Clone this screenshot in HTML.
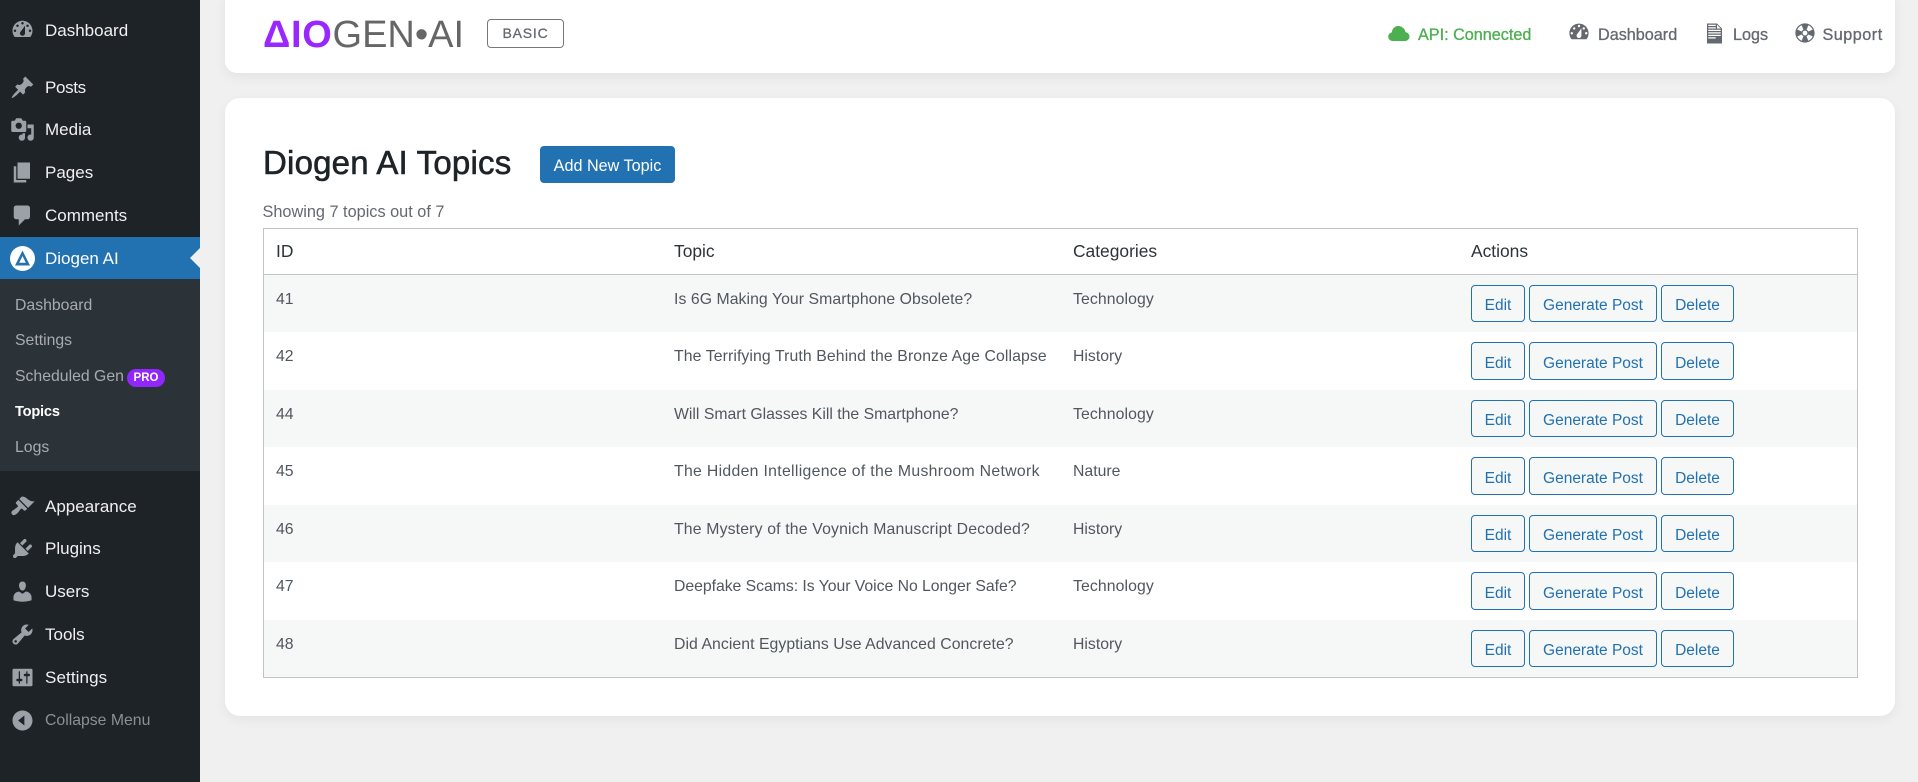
<!DOCTYPE html>
<html lang="en">
<head>
<meta charset="utf-8">
<title>Diogen AI Topics</title>
<style>
*{box-sizing:border-box}
html,body{margin:0;padding:0;width:1918px;height:782px;overflow:hidden;background:#f0f0f0;font-family:"Liberation Sans",Arial,sans-serif}
#side{position:absolute;left:0;top:0;width:200px;height:782px;background:#1d2327}
#side a{position:absolute;white-space:nowrap;text-decoration:none}
.m{left:45px;height:24px;line-height:24px;font-size:17px;color:#f0f0f1}
.s{left:15px;height:22px;line-height:22px;font-size:15.8px;color:#a8abaf}
.i{position:absolute;left:10px;width:25px;height:25px;fill:#9ca1a7}
#cur{position:absolute;left:0;top:237px;width:200px;height:42px;background:#2271b1}
#sub{position:absolute;left:0;top:279px;width:200px;height:192px;background:#2c3338}
#arrow{position:absolute;left:190px;top:248px;width:0;height:0;border:10px solid transparent;border-right-color:#f0f0f1;border-left:0}
#pro{position:absolute;left:127px;top:369px;width:38px;height:18px;border-radius:9px;background:#9127fc;color:#fff;font-size:11.5px;font-weight:700;line-height:18px;text-align:center}
#top{position:absolute;left:225px;top:-12px;width:1670px;height:85px;background:#fff;border-radius:12px;box-shadow:0 4px 12px rgba(0,0,0,.06)}
#main{position:absolute;left:225px;top:98px;width:1670px;height:618px;background:#fff;border-radius:15px;box-shadow:0 4px 12px rgba(0,0,0,.05)}
#logo{position:absolute;left:263px;top:13px;height:44px;line-height:44px;font-size:38px;color:#666;white-space:nowrap}
#logo b{color:#9b27ff;letter-spacing:.7px}
#badge{position:absolute;left:487px;top:19px;width:77px;height:29px;border:1px solid #777;border-radius:4px;font-size:14px;font-weight:400;letter-spacing:.8px;line-height:27px;text-align:center;color:#646970;-webkit-text-stroke:.3px #646970}
.n{position:absolute;top:25px;height:20px;line-height:20px;font-size:16.2px;color:#646970;white-space:nowrap;-webkit-text-stroke:.3px currentColor}
.ni{position:absolute;fill:#646970}
h1{position:absolute;left:263px;top:143px;margin:0;font-size:33px;line-height:40px;font-weight:400;letter-spacing:.2px;color:#1d2327;-webkit-text-stroke:.6px #1d2327;white-space:nowrap}
#add{position:absolute;left:540px;top:146px;width:135px;height:37px;background:#2271b1;border-radius:4px;color:#fff;font-size:16.2px;line-height:41px;text-align:center;white-space:nowrap}
#count{position:absolute;left:262.5px;top:202px;font-size:16.3px;line-height:20px;color:#646970;white-space:nowrap}
table{position:absolute;left:263px;top:228px;width:1595px;height:449px;table-layout:fixed;border-collapse:separate;border-spacing:0;border:1px solid #c3c4c7;background:#fff}
th{height:46px;padding:0 0 1px 12px;border-bottom:1px solid #c3c4c7;text-align:left;font-weight:400;font-size:17.4px;color:#2c3338;line-height:20px;vertical-align:middle}
td{padding:15px 0 0 12px;font-size:15.8px;line-height:20px;color:#50575e;vertical-align:top;white-space:nowrap;position:relative}
tr.a td{background:#f6f7f7}
.b{position:absolute;top:10px;height:37px;border:1px solid #2271b1;border-radius:4px;background:#f6f7f7;color:#2271b1;font-size:15.5px;line-height:40px;text-align:center}
tbody tr:nth-child(even) .b{height:38px;line-height:41px}
.b1{left:12px;width:54px}
.b2{left:70px;width:128px}
.b3{left:202px;width:73px}
</style>
</head>
<body>

<nav id="side">
<svg class="i" style="top:17px" viewBox="0 0 20 20"><path fill-rule="evenodd" d="M3.76 16h12.48c1.1-1.37 1.76-3.11 1.76-5 0-4.42-3.58-8-8-8s-8 3.58-8 8c0 1.89.66 3.63 1.76 5zM10 4c.55 0 1 .45 1 1s-.45 1-1 1-1-.45-1-1 .45-1 1-1zM6 6c.55 0 1 .45 1 1s-.45 1-1 1-1-.45-1-1 .45-1 1-1zm8 0c.55 0 1 .45 1 1s-.45 1-1 1-1-.45-1-1 .45-1 1-1zm-5.37 5.55L12 7v6c0 1.1-.9 2-2 2s-2-.9-2-2c0-.57.24-1.08.63-1.45zM4 10c.55 0 1 .45 1 1s-.45 1-1 1-1-.45-1-1 .45-1 1-1zm12 0c.55 0 1 .45 1 1s-.45 1-1 1-1-.45-1-1 .45-1 1-1z"/></svg>
<a class="m" style="top:19px">Dashboard</a>
<svg class="i" style="top:75px" viewBox="0 0 20 20"><path d="M10.44 3.02l1.82-1.82 6.36 6.35-1.83 1.82c-1.05-.68-2.48-.57-3.41.36l-.75.75c-.92.93-1.04 2.35-.35 3.41l-1.83 1.82-2.41-2.41-2.8 2.79c-.42.42-3.38 2.71-3.8 2.29s1.86-3.39 2.28-3.81l2.79-2.79L4.1 9.36l1.83-1.82c1.05.69 2.48.57 3.4-.36l.75-.75c.93-.92 1.05-2.35.36-3.41z"/></svg>
<a class="m" style="top:76px;letter-spacing:-.35px">Posts</a>
<svg class="i" style="top:117px" viewBox="0 0 20 20"><path fill-rule="evenodd" d="M13 11V4c0-.55-.45-1-1-1h-1.67L9 1H5L3.67 3H2c-.55 0-1 .45-1 1v7c0 .55.45 1 1 1h10c.55 0 1-.45 1-1zM7 4.5c1.38 0 2.5 1.12 2.5 2.5S8.38 9.5 7 9.5 4.5 8.38 4.5 7 5.62 4.5 7 4.5zM14 6h5v10.5c0 1.38-1.12 2.5-2.5 2.5S14 17.88 14 16.5s1.12-2.5 2.5-2.5c.17 0 .34.02.5.05V9h-3V6zm-4 8.05V13h2v3.5c0 1.38-1.12 2.5-2.5 2.5S7 17.88 7 16.5 8.12 14 9.5 14c.17 0 .34.02.5.05z"/></svg>
<a class="m" style="top:118px">Media</a>
<svg class="i" style="top:160px" viewBox="0 0 20 20"><path d="M6 15V2h10v13H6zm-1 1h8v2H3V5h2v11z"/></svg>
<a class="m" style="top:161px">Pages</a>
<svg class="i" style="top:203px" viewBox="0 0 20 20"><path d="M5 2h9c1.1 0 2 .9 2 2v7c0 1.1-.9 2-2 2h-2l-5 5v-5H5c-1.1 0-2-.9-2-2V4c0-1.1.9-2 2-2z"/></svg>
<a class="m" style="top:204px">Comments</a>

<div id="cur"></div>
<div id="arrow"></div>
<svg class="i" style="top:246px;fill:#fff" viewBox="0 0 25 25"><circle cx="12.5" cy="12.5" r="12.5" fill="#fff"/><path fill="#2271b1" fill-rule="evenodd" d="M12.5 4.5L20 19.5H5zM12.5 10L9.2 16.7h6.6z"/></svg>
<a class="m" style="top:247px;color:#fff">Diogen AI</a>

<div id="sub"></div>
<a class="s" style="top:295px">Dashboard</a>
<a class="s" style="top:330px">Settings</a>
<a class="s" style="top:366px">Scheduled Gen</a>
<span id="pro">PRO</span>
<a class="s" style="top:401px;color:#fff;font-weight:700;font-size:14.6px;letter-spacing:-.2px">Topics</a>
<a class="s" style="top:437px">Logs</a>

<svg class="i" style="top:494px" viewBox="0 0 20 20"><path d="M14.48 11.06L7.41 3.99l1.5-1.5c.5-.56 2.3-.47 3.51.32 1.21.8 1.43 1.28 2.91 2.1 1.18.64 2.45 1.26 4.45.85zm-.71.71L6.7 4.7 4.93 6.47c-.39.39-.39 1.02 0 1.41l1.06 1.06c.39.39.39 1.03 0 1.42-.6.6-1.43 1.11-2.21 1.69-.35.26-.7.53-1.01.84C1.43 13.23.4 14.98 1.7 16.28c1.3 1.3 3.05.27 4.39-1.07.31-.31.58-.66.84-1.01.58-.78 1.09-1.61 1.69-2.21.39-.39 1.03-.39 1.42 0l1.06 1.06c.39.39 1.02.39 1.41 0z"/></svg>
<a class="m" style="top:495px">Appearance</a>
<svg class="i" style="top:536px" viewBox="0 0 20 20"><path d="M13.11 4.36L9.87 7.6 8 5.73l3.24-3.24c.35-.34 1.05-.2 1.56.32.52.51.66 1.21.31 1.55zm-8 1.77l.91-1.12 9.01 9.01-1.19.84c-.71.71-2.63 1.16-3.82 1.16H6.14L4.9 17.26c-.59.59-1.54.59-2.12 0-.59-.58-.59-1.53 0-2.12l1.24-1.24v-3.88c0-1.13.4-3.19 1.09-3.89zm7.26 3.97l3.24-3.24c.34-.35 1.04-.21 1.55.31.52.51.66 1.21.31 1.55l-3.24 3.25z"/></svg>
<a class="m" style="top:537px">Plugins</a>
<svg class="i" style="top:579px" viewBox="0 0 20 20"><path d="M10 9.25c-2.27 0-2.73-3.44-2.73-3.44C7 4.02 7.82 2 9.97 2c2.16 0 2.98 2.02 2.71 3.81 0 0-.41 3.44-2.68 3.44zm0 2.57L12.72 10c2.39 0 4.52 2.33 4.52 4.53v2.49s-3.65 1.13-7.24 1.13c-3.65 0-7.24-1.13-7.24-1.13v-2.49c0-2.25 1.94-4.48 4.47-4.48z"/></svg>
<a class="m" style="top:580px">Users</a>
<svg class="i" style="top:622px" viewBox="0 0 20 20"><path fill-rule="evenodd" d="M16.68 9.77c-1.34 1.34-3.3 1.67-4.95.99l-5.41 6.52c-.99.99-2.59.99-3.58 0s-.99-2.59 0-3.57l6.52-5.42c-.68-1.65-.35-3.61.99-4.95 1.28-1.28 3.12-1.62 4.72-1.06l-2.89 2.89 2.82 2.82 2.86-2.87c.53 1.58.18 3.39-1.08 4.65zM3.81 16.21c.4.39 1.04.39 1.43 0 .4-.4.4-1.04 0-1.43-.39-.4-1.03-.4-1.43 0-.39.39-.39 1.03 0 1.43z"/></svg>
<a class="m" style="top:623px">Tools</a>
<svg class="i" style="top:665px" viewBox="0 0 20 20"><path fill-rule="evenodd" d="M18 16V4c0-.55-.45-1-1-1H3c-.55 0-1 .45-1 1v12c0 .55.45 1 1 1h14c.55 0 1-.45 1-1zM8 11h1c.55 0 1 .45 1 1s-.45 1-1 1H8v1.5c0 .28-.22.5-.5.5s-.5-.22-.5-.5V13H6c-.55 0-1-.45-1-1s.45-1 1-1h1V5.5c0-.28.22-.5.5-.5s.5.22.5.5V11zm5-2h-1c-.55 0-1-.45-1-1s.45-1 1-1h1V5.5c0-.28.22-.5.5-.5s.5.22.5.5V7h1c.55 0 1 .45 1 1s-.45 1-1 1h-1v5.5c0 .28-.22.5-.5.5s-.5-.22-.5-.5V9z"/></svg>
<a class="m" style="top:666px;letter-spacing:.1px">Settings</a>
<svg class="i" style="top:708px" viewBox="0 0 20 20"><path fill-rule="evenodd" d="M18 10c0-4.42-3.58-8-8-8s-8 3.58-8 8 3.58 8 8 8 8-3.58 8-8zm-6.5-4v8l-5-4z"/></svg>
<a class="m" style="top:709px;color:#8c8f94;font-size:15.8px">Collapse Menu</a>
</nav>

<header>
<div id="top"></div>
<div id="logo"><b>ΔIO</b>GEN•AI</div>
<div id="badge">BASIC</div>

<svg class="ni" style="left:1387px;top:21px;width:25px;height:25px;fill:#4caf50" viewBox="0 0 20 20"><path d="M14.9 9c1.8.2 3.1 1.7 3.1 3.5 0 1.9-1.6 3.5-3.5 3.5h-10C2.6 16 1 14.4 1 12.5c0-1.7 1.2-3.1 2.9-3.4C4 6.3 6.3 4 9 4c2.9 0 5.3 2.2 5.9 5z"/></svg>
<span class="n" style="left:1418px;color:#4caf50">API: Connected</span>

<svg class="ni" style="left:1567px;top:20px;width:24px;height:24px" viewBox="0 0 20 20"><path fill-rule="evenodd" d="M3.76 16h12.48c1.1-1.37 1.76-3.11 1.76-5 0-4.42-3.58-8-8-8s-8 3.58-8 8c0 1.89.66 3.63 1.76 5zM10 4c.55 0 1 .45 1 1s-.45 1-1 1-1-.45-1-1 .45-1 1-1zM6 6c.55 0 1 .45 1 1s-.45 1-1 1-1-.45-1-1 .45-1 1-1zm8 0c.55 0 1 .45 1 1s-.45 1-1 1-1-.45-1-1 .45-1 1-1zm-5.37 5.55L12 7v6c0 1.1-.9 2-2 2s-2-.9-2-2c0-.57.24-1.08.63-1.45zM4 10c.55 0 1 .45 1 1s-.45 1-1 1-1-.45-1-1 .45-1 1-1zm12 0c.55 0 1 .45 1 1s-.45 1-1 1-1-.45-1-1 .45-1 1-1z"/></svg>
<span class="n" style="left:1598px">Dashboard</span>

<svg class="ni" style="left:1702px;top:21px;width:25px;height:25px" viewBox="0 0 20 20"><path fill-rule="evenodd" d="M12 2l4 4v12H4V2h8zM5 3v1h6V3H5zm7 3h3l-3-3v3zM5 5v1h6V5H5zm10 3V7H5v1h10zm0 2V9H5v1h10zm0 2v-1H5v1h10zm-4 2v-1H5v1h6z"/></svg>
<span class="n" style="left:1733px">Logs</span>

<svg class="ni" style="left:1792.5px;top:21px;width:24px;height:24px" viewBox="0 0 20 20"><path fill-rule="evenodd" d="M18 10c0-4.42-3.58-8-8-8s-8 3.58-8 8 3.58 8 8 8 8-3.58 8-8zM7.23 3.57L8.72 7.3c-.62.29-1.13.8-1.42 1.42L3.57 7.23c.71-1.64 2.02-2.95 3.66-3.66zm9.2 3.66L12.7 8.72c-.29-.62-.8-1.13-1.42-1.42l1.49-3.73c1.64.71 2.95 2.02 3.66 3.66zM10 12c-1.1 0-2-.9-2-2s.9-2 2-2 2 .9 2 2-.9 2-2 2zm-6.43.77l3.73-1.49c.29.62.8 1.13 1.42 1.42l-1.49 3.73c-1.64-.71-2.95-2.02-3.66-3.66zm9.2 3.66l-1.49-3.73c.62-.29 1.13-.8 1.42-1.42l3.73 1.49c-.71 1.64-2.02 2.95-3.66 3.66z"/></svg>
<span class="n" style="left:1822.5px;letter-spacing:.5px">Support</span>
</header>

<main>
<div id="main"></div>
<h1>Diogen AI Topics</h1>
<div id="add">Add New Topic</div>
<div id="count">Showing 7 topics out of 7</div>

<table>
<colgroup><col style="width:398px"><col style="width:399px"><col style="width:398px"><col></colgroup>
<thead><tr><th>ID</th><th>Topic</th><th>Categories</th><th>Actions</th></tr></thead>
<tbody>
<tr class="a" style="height:57px"><td>41</td><td style="letter-spacing:.06px">Is 6G Making Your Smartphone Obsolete?</td><td style="letter-spacing:.1px">Technology</td><td><span class="b b1">Edit</span><span class="b b2">Generate Post</span><span class="b b3">Delete</span></td></tr>
<tr style="height:58px"><td>42</td><td style="letter-spacing:.1px">The Terrifying Truth Behind the Bronze Age Collapse</td><td>History</td><td><span class="b b1">Edit</span><span class="b b2">Generate Post</span><span class="b b3">Delete</span></td></tr>
<tr class="a" style="height:57px"><td>44</td><td>Will Smart Glasses Kill the Smartphone?</td><td style="letter-spacing:.1px">Technology</td><td><span class="b b1">Edit</span><span class="b b2">Generate Post</span><span class="b b3">Delete</span></td></tr>
<tr style="height:58px"><td>45</td><td style="letter-spacing:.31px">The Hidden Intelligence of the Mushroom Network</td><td>Nature</td><td><span class="b b1">Edit</span><span class="b b2">Generate Post</span><span class="b b3">Delete</span></td></tr>
<tr class="a" style="height:57px"><td>46</td><td style="letter-spacing:.16px">The Mystery of the Voynich Manuscript Decoded?</td><td>History</td><td><span class="b b1">Edit</span><span class="b b2">Generate Post</span><span class="b b3">Delete</span></td></tr>
<tr style="height:58px"><td>47</td><td style="letter-spacing:-.04px">Deepfake Scams: Is Your Voice No Longer Safe?</td><td style="letter-spacing:.1px">Technology</td><td><span class="b b1">Edit</span><span class="b b2">Generate Post</span><span class="b b3">Delete</span></td></tr>
<tr class="a" style="height:57px"><td>48</td><td style="letter-spacing:.055px">Did Ancient Egyptians Use Advanced Concrete?</td><td>History</td><td><span class="b b1">Edit</span><span class="b b2">Generate Post</span><span class="b b3">Delete</span></td></tr>
</tbody>
</table>
</main>

</body>
</html>
